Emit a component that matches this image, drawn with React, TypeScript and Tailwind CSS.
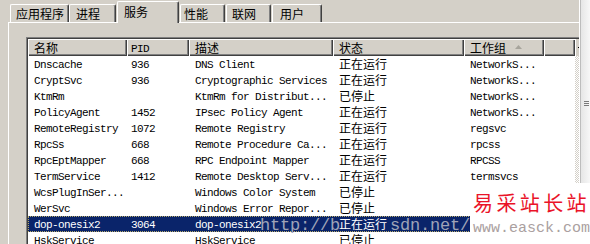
import React from "react"

const LATIN = "font-['Liberation_Mono',monospace] text-[11px] tracking-[-0.6px]"
const CJK = "font-['Noto_Sans_CJK_SC',sans-serif] text-[12px]"
const COLS = "grid grid-cols-[99px_62px_144px_131px_80px_1fr]"

type Row = {
  name: string
  pid: string
  desc: string
  status: string
  group: string
  selected?: boolean
}

const ROWS: Row[] = [
  { name: "Dnscache", pid: "936", desc: "DNS Client", status: "正在运行", group: "NetworkS..." },
  { name: "CryptSvc", pid: "936", desc: "Cryptographic Services", status: "正在运行", group: "NetworkS..." },
  { name: "KtmRm", pid: "", desc: "KtmRm for Distribut...", status: "已停止", group: "NetworkS..." },
  { name: "PolicyAgent", pid: "1452", desc: "IPsec Policy Agent", status: "正在运行", group: "NetworkS..." },
  { name: "RemoteRegistry", pid: "1072", desc: "Remote Registry", status: "正在运行", group: "regsvc" },
  { name: "RpcSs", pid: "668", desc: "Remote Procedure Ca...", status: "正在运行", group: "rpcss" },
  { name: "RpcEptMapper", pid: "668", desc: "RPC Endpoint Mapper", status: "正在运行", group: "RPCSS" },
  { name: "TermService", pid: "1412", desc: "Remote Desktop Serv...", status: "正在运行", group: "termsvcs" },
  { name: "WcsPlugInSer...", pid: "", desc: "Windows Color System", status: "已停止", group: "" },
  { name: "WerSvc", pid: "", desc: "Windows Error Repor...", status: "已停止", group: "" },
  { name: "dop-onesix2", pid: "3064", desc: "dop-onesix2", status: "正在运行", group: "", selected: true },
  { name: "HskService", pid: "", desc: "HskService", status: "已停止", group: "" },
]

const TABS = [
  { label: "应用程序", cls: "ml-[10px] w-[59px] pl-[5px]" },
  { label: "进程", cls: "w-[47px] pl-[6px]" },
  { label: "服务", cls: "mx-[1px] w-[62px] pl-[6px]", active: true },
  { label: "性能", cls: "w-[45px] pl-[3px]" },
  { label: "联网", cls: "ml-[1px] w-[45px] pl-[5px]" },
  { label: "用户", cls: "ml-[1px] w-[50px] pl-[7px]" },
]

const HEADER_CELL =
  "h-full flex items-center bg-[#d4d0c8] shadow-[inset_1px_1px_0_#ffffff,inset_-1px_-1px_0_#404040,inset_-2px_-2px_0_#808080] overflow-hidden whitespace-nowrap text-black"

function Tabs() {
  return (
    <div className="h-[22px] flex items-end shrink-0">
      {TABS.map((t) =>
        t.active ? (
          <div
            key={t.label}
            className={`${t.cls} relative z-10 h-[22px] -mb-[1px] bg-[#d4d0c8] border-t border-l border-t-white border-l-white border-r border-r-[#404040] shadow-[inset_-1px_0_0_#808080] rounded-t-[2px] pt-[3px] ${CJK} leading-[14px] text-black`}
          >
            {t.label}
          </div>
        ) : (
          <div
            key={t.label}
            className={`${t.cls} h-[18px] bg-[#d4d0c8] border-t border-l border-t-white border-l-white border-r border-r-[#404040] shadow-[inset_-1px_0_0_#808080] rounded-t-[2px] pt-[2px] ${CJK} leading-[14px] text-black`}
          >
            {t.label}
          </div>
        )
      )}
    </div>
  )
}

function Header() {
  return (
    <div className={`${COLS} h-[17px] shrink-0`}>
      <div className={`${HEADER_CELL} pl-[6px] ${CJK} leading-[17px]`}>名称</div>
      <div className={`${HEADER_CELL} pl-[4px] ${LATIN} leading-[20px] pt-[2px]`}>PID</div>
      <div className={`${HEADER_CELL} pl-[6px] ${CJK} leading-[17px]`}>描述</div>
      <div className={`${HEADER_CELL} pl-[6px] ${CJK} leading-[17px]`}>状态</div>
      <div className={`${HEADER_CELL} pl-[6px] ${CJK} leading-[17px]`}>
        工作组
        <svg width="7" height="4" viewBox="0 0 7 4" className="ml-[9px] mt-[-1px]">
          <polygon points="3.5,0 7,4 0,4" fill="#a7a49c" />
        </svg>
      </div>
      <div className={HEADER_CELL}></div>
    </div>
  )
}

function ServiceRow({ row }: { row: Row }) {
  const color = row.selected ? "text-white" : "text-black"
  return (
    <div
      className={`${COLS} h-[16px] shrink-0 overflow-hidden ${
        row.selected
          ? "bg-[#0a246a] outline-1 outline-dotted -outline-offset-1 outline-[#b4a86a]"
          : ""
      }`}
    >
      <div className={`pl-[6px] ${LATIN} leading-[18px] whitespace-nowrap overflow-hidden ${color}`}>{row.name}</div>
      <div className={`pl-[4px] ${LATIN} leading-[18px] whitespace-nowrap overflow-hidden ${color}`}>{row.pid}</div>
      <div className={`pl-[6px] ${LATIN} leading-[18px] whitespace-nowrap overflow-hidden ${color}`}>{row.desc}</div>
      <div className={`pl-[6px] ${CJK} leading-[16px] whitespace-nowrap overflow-hidden ${color}`}>{row.status}</div>
      <div className={`pl-[6px] ${LATIN} leading-[18px] whitespace-nowrap overflow-hidden ${color}`}>{row.group}</div>
      <div></div>
    </div>
  )
}

function ServiceList() {
  return (
    <div className="flex-1 border-t border-l border-[#808080]">
      <div className="h-full border-t border-l border-[#404040] bg-white flex">
        <div className="w-[547px] flex flex-col">
          <Header />
          {ROWS.map((r) => (
            <ServiceRow key={r.name} row={r} />
          ))}
        </div>
        {/* list scrollbar, mostly cut off */}
        <div className="w-[4px] flex flex-col">
          <div className="h-[17px] bg-[#d4d0c8] border-l border-white flex items-center">
            <div className="ml-[2px] w-[1px] h-[1px] bg-black"></div>
          </div>
          <div className="flex-1 bg-[repeating-conic-gradient(#d4d0c8_0_25%,#ffffff_0_50%)] bg-[length:2px_2px]"></div>
        </div>
      </div>
    </div>
  )
}

export default function App() {
  return (
    <div className="relative w-[590px] h-[244px] overflow-hidden bg-[#d4d0c8] flex select-none">
      <div className="w-[579px] h-full flex flex-col overflow-hidden">
        <Tabs />
        <div className="flex-1 ml-[8px] border-t border-l border-white pt-[14px] pl-[17px] flex">
          <ServiceList />
        </div>
      </div>

      {/* page scrollbar on the right */}
      <div className="w-[11px] h-full border-l border-white">
        <div className="h-full border-l border-[#bdbdbd] bg-linear-to-r from-[#e6e6e6] to-[#f7f7f7] pt-[101px] pl-[3px]">
          <div className="w-[5px] flex flex-col gap-[1px]">
            <div className="h-[1px] bg-[#7a7a7a]"></div>
            <div className="h-[1px] bg-[#7a7a7a]"></div>
            <div className="h-[1px] bg-[#7a7a7a]"></div>
          </div>
        </div>
      </div>

      {/* watermark over the selected row */}
      <span className="absolute left-[260px] top-[217px] font-['Liberation_Mono',monospace] text-[17px] tracking-[-0.2px] leading-[17px] text-[#9ea3b8] whitespace-nowrap">
        http://b
      </span>
      <span className="absolute left-[390px] top-[217px] font-['Liberation_Mono',monospace] text-[17px] tracking-[-0.2px] leading-[17px] text-[#9ea3b8] whitespace-nowrap">
        sdn.net/
      </span>

      {/* site watermark box */}
      <div className="absolute left-[470px] top-[183px] w-[120px] h-[61px] bg-white pl-[3px] pt-[10px] flex flex-col">
        <span className="font-['Noto_Sans_CJK_SC',sans-serif] text-[20px] leading-[20px] tracking-[3.4px] text-[#ea1328] whitespace-nowrap">
          易采站长站
        </span>
        <span className="mt-[8px] font-['Liberation_Mono',monospace] text-[15px] leading-[15px] text-[#aaa0a0] whitespace-nowrap">
          www.easck.com
        </span>
      </div>
    </div>
  )
}
